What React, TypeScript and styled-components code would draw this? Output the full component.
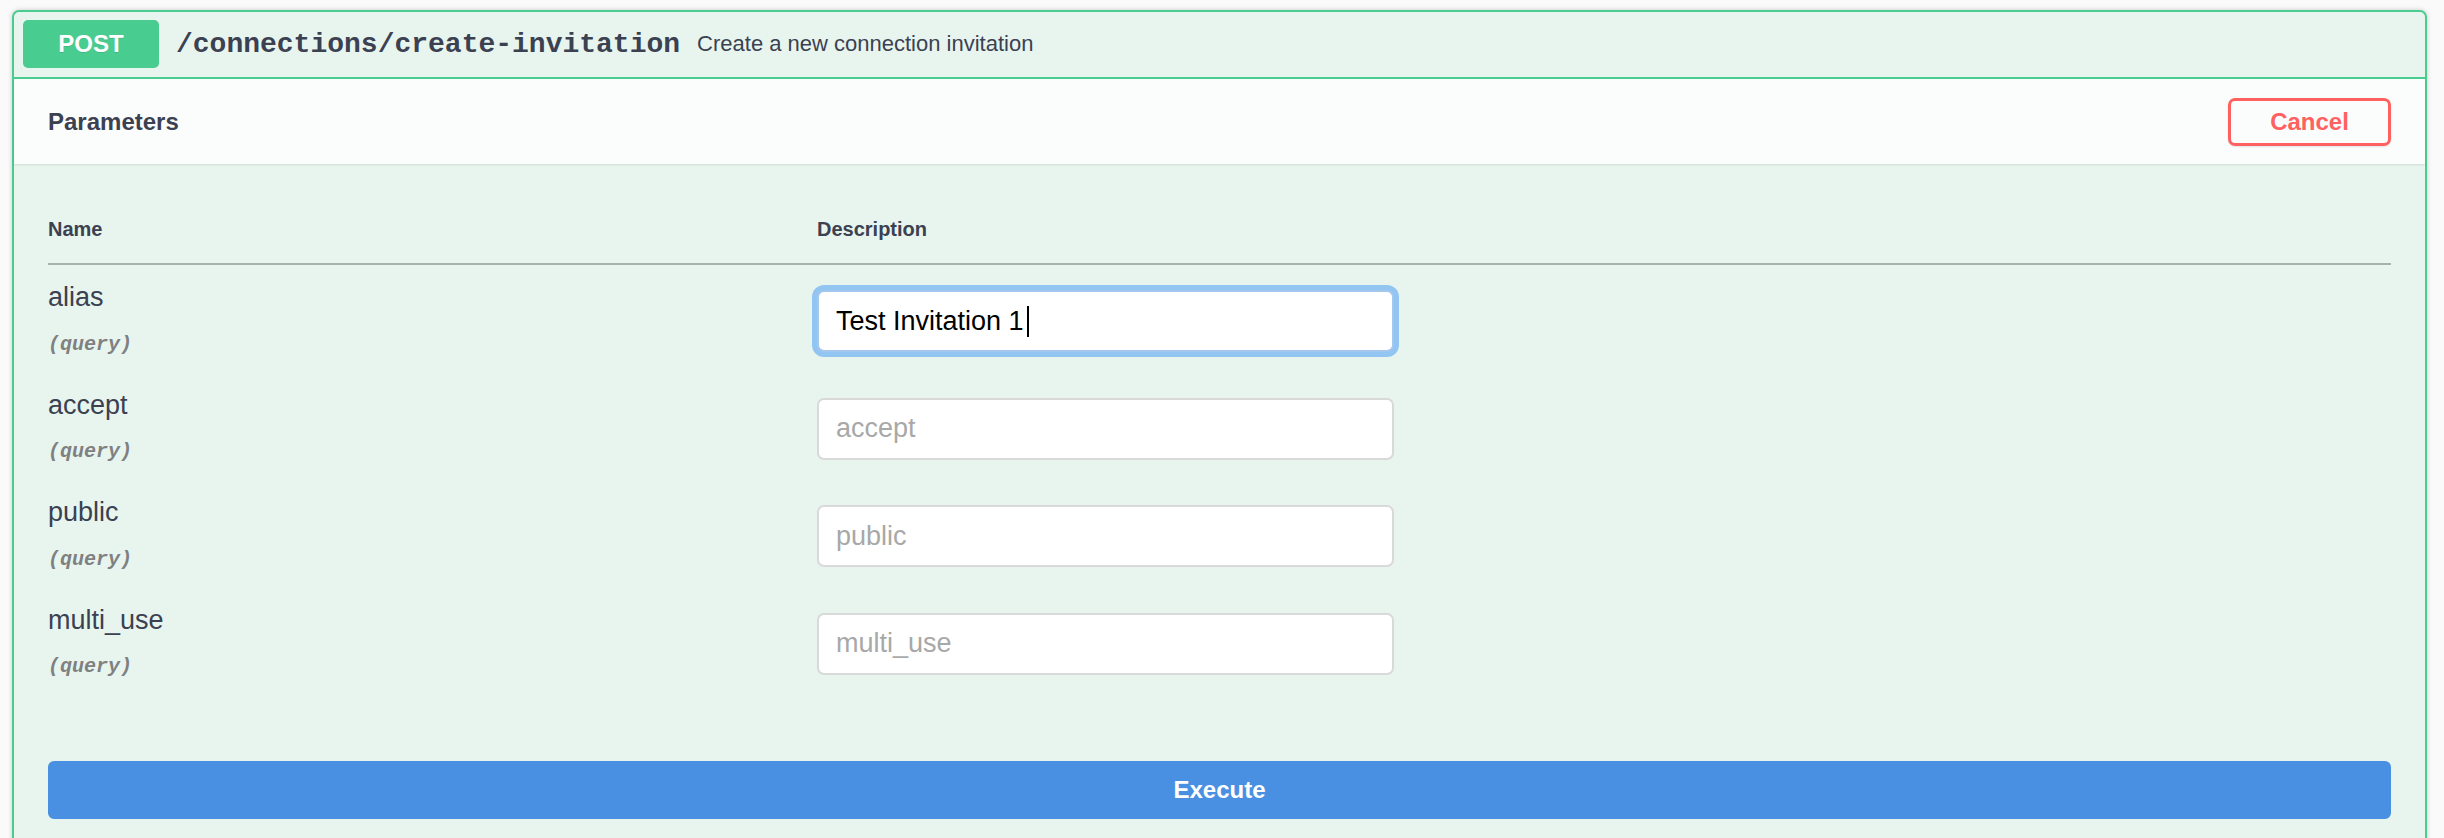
import styled, { createGlobalStyle, css } from 'styled-components';

const GlobalStyle = createGlobalStyle`
  html, body {
    margin: 0;
    padding: 0;
  }
  body {
    background: #fafafa;
    font-family: "Liberation Sans", Arial, sans-serif;
    color: #3b4151;
  }
`;

type Param = { name: string; value?: string; focused?: boolean };

const params: Param[] = [
  { name: 'alias', value: 'Test Invitation 1', focused: true },
  { name: 'accept' },
  { name: 'public' },
  { name: 'multi_use' },
];

export default function App() {
  return (
    <Page>
      <GlobalStyle />
      <OpBlock>
        <Summary>
          <Method>POST</Method>
          <Path>/connections/create-invitation</Path>
          <SummaryText>Create a new connection invitation</SummaryText>
        </Summary>

        <SectionHeader>
          <SectionTitle>Parameters</SectionTitle>
          <CancelButton>Cancel</CancelButton>
        </SectionHeader>

        <TableContainer>
          <ParamTable>
            <thead>
              <tr>
                <HeadCell $width="769px">Name</HeadCell>
                <HeadCell>Description</HeadCell>
              </tr>
            </thead>
            <tbody>
              {params.map((p) => (
                <tr key={p.name}>
                  <Cell>
                    <ParamName>{p.name}</ParamName>
                    <ParamIn>(query)</ParamIn>
                  </Cell>
                  <Cell>
                    {p.focused ? (
                      <FocusedField>
                        {p.value}
                        <Caret />
                      </FocusedField>
                    ) : (
                      <Field type="text" placeholder={p.name} />
                    )}
                  </Cell>
                </tr>
              ))}
            </tbody>
          </ParamTable>
        </TableContainer>

        <ExecuteWrapper>
          <ExecuteButton>Execute</ExecuteButton>
        </ExecuteWrapper>
      </OpBlock>
    </Page>
  );
}

const Page = styled.div`
  padding: 10px 17px 0 12px;
`;

const OpBlock = styled.section`
  border: 2px solid #49cc90;
  border-radius: 7px;
  background: #e8f5ef;
  box-shadow: 0 0 5px rgba(0, 0, 0, 0.19);
`;

const Summary = styled.div`
  display: flex;
  align-items: center;
  padding: 8px 9px 9px;
  border-bottom: 2px solid #49cc90;
`;

const Method = styled.span`
  display: flex;
  align-items: center;
  justify-content: center;
  min-width: 136px;
  height: 48px;
  border-radius: 5px;
  background: #49cc90;
  color: #fff;
  font-size: 24px;
  font-weight: 700;
  text-shadow: 0 1px 0 rgba(0, 0, 0, 0.1);
`;

const Path = styled.span`
  padding: 0 17px;
  font-family: "Liberation Mono", "Courier New", monospace;
  font-size: 28px;
  font-weight: 700;
  color: #3b4151;
`;

const SummaryText = styled.span`
  font-size: 22px;
  color: #3b4151;
`;

const SectionHeader = styled.div`
  display: flex;
  align-items: center;
  justify-content: space-between;
  min-height: 85px;
  padding: 0 34px;
  background: rgba(255, 255, 255, 0.8);
  box-shadow: 0 1px 2px rgba(0, 0, 0, 0.1);
`;

const SectionTitle = styled.h4`
  margin: 0;
  font-size: 24px;
  font-weight: 700;
  color: #3b4151;
`;

const CancelButton = styled.button`
  width: 163px;
  height: 48px;
  border: 3px solid #ff6060;
  border-radius: 7px;
  background: transparent;
  color: #ff6060;
  font-family: "Liberation Sans", Arial, sans-serif;
  font-size: 24px;
  font-weight: 700;
  box-shadow: 0 1px 2px rgba(0, 0, 0, 0.1);
`;

const TableContainer = styled.div`
  padding: 34px 34px;
`;

const ParamTable = styled.table`
  width: 100%;
  border-collapse: collapse;
`;

const HeadCell = styled.th<{ $width?: string }>`
  width: ${(p) => p.$width || 'auto'};
  padding: 20px 0 22px;
  text-align: left;
  font-size: 20px;
  line-height: 23px;
  font-weight: 700;
  color: #3b4151;
  border-bottom: 2px solid #a9b0b0;
`;

const Cell = styled.td`
  padding: 17px 0;
  vertical-align: top;
`;

const ParamName = styled.div`
  font-size: 27px;
  line-height: 31px;
  color: #3b4151;
`;

const ParamIn = styled.div`
  margin-top: 19.5px;
  font-family: "Liberation Mono", "Courier New", monospace;
  font-size: 20px;
  line-height: 23px;
  font-style: italic;
  font-weight: 700;
  color: gray;
`;

const fieldBase = css`
  box-sizing: border-box;
  width: 577px;
  height: 62px;
  margin: 8px 0 3px;
  padding: 0 17px;
  border: 2px solid #d9d9d9;
  border-radius: 7px;
  background: #fff;
  font-family: "Liberation Sans", Arial, sans-serif;
  font-size: 27px;
  color: #000;
`;

const Field = styled.input`
  ${fieldBase}
  display: block;
  outline: none;
  &::placeholder {
    color: #a8a8a8;
  }
`;

const FocusedField = styled.div`
  ${fieldBase}
  display: flex;
  align-items: center;
  border-color: #a3c8ee;
  box-shadow: 0 0 0 5px #93c5f2;
`;

const Caret = styled.span`
  display: inline-block;
  width: 2px;
  height: 31px;
  margin-left: 3px;
  background: #000;
`;

const ExecuteWrapper = styled.div`
  padding: 32px 34px 34px;
`;

const ExecuteButton = styled.button`
  display: block;
  width: 100%;
  height: 58px;
  border: 2px solid #4990e2;
  border-radius: 6px;
  background: #4990e2;
  color: #fff;
  font-family: "Liberation Sans", Arial, sans-serif;
  font-size: 24px;
  font-weight: 700;
`;
